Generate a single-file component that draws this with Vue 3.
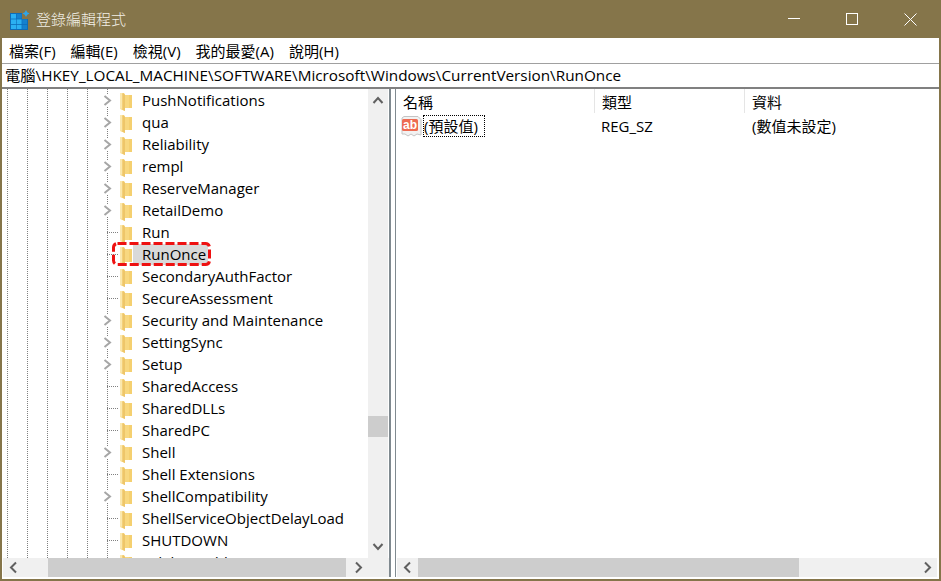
<script setup>
const rows = [
  ['PushNotifications', 1], ['qua', 1], ['Reliability', 1], ['rempl', 1],
  ['ReserveManager', 1], ['RetailDemo', 1], ['Run', 0], ['RunOnce', 0],
  ['SecondaryAuthFactor', 0], ['SecureAssessment', 0], ['Security and Maintenance', 1],
  ['SettingSync', 1], ['Setup', 1], ['SharedAccess', 0], ['SharedDLLs', 0],
  ['SharedPC', 0], ['Shell', 1], ['Shell Extensions', 0], ['ShellCompatibility', 1],
  ['ShellServiceObjectDelayLoad', 0], ['SHUTDOWN', 0], ['sidebarwidth', 0]
]
const menus = ['檔案(F)', '編輯(E)', '檢視(V)', '我的最愛(A)', '說明(H)']
const guides = [0, 1, 2, 3, 4]
</script>

<template>
  <div class="window">
    <header class="title">
      <svg class="appicon" width="21" height="20" viewBox="0 0 21 20">
        <rect x="0" y="3" width="18" height="17" fill="#0e6cb8" />
        <g fill="#2bb0f2">
          <rect x="1" y="4" width="5" height="4.6" />
          <rect x="1" y="9.4" width="5" height="4.6" />
          <rect x="6.6" y="9.4" width="5" height="4.6" />
          <rect x="1" y="14.8" width="5" height="4.2" />
          <rect x="6.6" y="14.8" width="5" height="4.2" />
        </g>
        <g fill="#1581cf">
          <rect x="6.6" y="4" width="5" height="4.6" />
          <rect x="12.2" y="9.4" width="4.8" height="4.6" />
          <rect x="12.2" y="14.8" width="4.8" height="4.2" />
        </g>
        <rect x="12" y="2" width="9" height="7" fill="#85754a" />
        <path d="M16 0l1.2 2.3L19.6 3.5 17.2 4.7 16 7l-1.2-2.3L12.4 3.5l2.4-1.2z" fill="#2fa6ea" />
      </svg>
      <span class="title-text">登錄編輯程式</span>
      <div class="controls">
        <svg class="ctl" width="12" height="12" viewBox="0 0 12 12"><path d="M0 5.5h12" stroke="#fff" fill="none" /></svg>
        <svg class="ctl" width="12" height="12" viewBox="0 0 12 12"><rect x=".5" y=".5" width="11" height="11" stroke="#fff" fill="none" /></svg>
        <svg class="ctl" width="13" height="13" viewBox="0 0 13 13"><path d="M.5.5l12 12M12.5.5l-12 12" stroke="#fff" fill="none" /></svg>
      </div>
    </header>

    <nav class="menu">
      <span v-for="m in menus" :key="m">{{ m }}</span>
    </nav>

    <div class="addr">電腦\HKEY_LOCAL_MACHINE\SOFTWARE\Microsoft\Windows\CurrentVersion\RunOnce</div>

    <main class="panes">
      <section class="tree-pane">
        <div class="tree-body">
          <div class="tree">
            <div v-for="r in rows" :key="r[0]" class="row">
              <i v-for="g in guides" :key="g" class="guide"></i>
              <div class="twist">
                <svg v-if="r[1]" class="chev" width="9" height="11" viewBox="0 0 9 11">
                  <path d="M1.5 1l5.5 4.5L1.5 10" fill="none" stroke="#a6a6a6" stroke-width="2" />
                </svg>
                <i v-else class="stub"></i>
              </div>
              <svg class="folder" width="13" height="18" viewBox="0 0 13 18">
                <path d="M0 0h4l1 2h7v13H5v3L0 16z" fill="#f8d880" />
                <path d="M0 0h2.4v15.4L0 16z" fill="#fbe8ae" />
                <path d="M2.4 0.5h1.6L5 2v16l-2.6-1.2z" fill="#eec669" />
                <path d="M9 2h3v13H9z" fill="#f5d070" />
              </svg>
              <span class="label" :class="{ sel: r[0] === 'RunOnce' }">{{ r[0] }}</span>
              <svg v-if="r[0] === 'RunOnce'" class="mark" width="99" height="24" viewBox="0 0 99 24">
                <rect x="1.5" y="1.5" width="96" height="21" rx="4" fill="none" stroke="#ee1111" stroke-width="3" stroke-dasharray="9 3" />
              </svg>
            </div>
          </div>
          <div class="vbar">
            <svg class="arr" width="20" height="22" viewBox="0 0 20 22"><path d="M5.5 14l4.5-5 4.5 5" fill="none" stroke="#606060" stroke-width="2" /></svg>
            <div class="vtrack"><div class="vthumb"></div></div>
            <svg class="arr" width="20" height="22" viewBox="0 0 20 22"><path d="M5.5 8l4.5 5 4.5-5" fill="none" stroke="#606060" stroke-width="2" /></svg>
          </div>
        </div>
        <div class="hbar">
          <svg class="harr" width="20" height="19" viewBox="0 0 20 19"><path d="M13 4.5l-5 5 5 5" fill="none" stroke="#606060" stroke-width="2" /></svg>
          <div class="htrack t1"><div class="hthumb"></div></div>
          <svg class="harr" width="20" height="19" viewBox="0 0 20 19"><path d="M8 4.5l5 5-5 5" fill="none" stroke="#606060" stroke-width="2" /></svg>
          <div class="corner"></div>
        </div>
      </section>

      <div class="split"></div>

      <section class="list-pane">
        <div class="list-head">
          <div class="hcell c1">名稱</div>
          <div class="hcell c2">類型</div>
          <div class="hcell c3">資料</div>
        </div>
        <div class="list-row">
          <div class="cell c1 namecell">
            <svg class="ab" width="21" height="22" viewBox="0 0 21 22">
              <path d="M3 1.5h14l3 3V20l-4-1-3 2-3-2-3 2-3-2H1V3z" fill="#f2f2f2" stroke="#c4c4c4" />
              <rect x="1" y="4" width="16" height="12" rx="1.5" fill="#ee6a52" />
              <text x="9" y="14" class="abtext">ab</text>
            </svg>
            <span class="focus">(預設值)</span>
          </div>
          <div class="cell c2">REG_SZ</div>
          <div class="cell c3">(數值未設定)</div>
        </div>
        <div class="list-fill"></div>
        <div class="hbar lbar">
          <svg class="harr" width="21" height="19" viewBox="0 0 21 19"><path d="M13 4.5l-5 5 5 5" fill="none" stroke="#606060" stroke-width="2" /></svg>
          <div class="htrack t2"><div class="hthumb"></div></div>
          <svg class="harr" width="20" height="19" viewBox="0 0 20 19"><path d="M8 4.5l5 5-5 5" fill="none" stroke="#606060" stroke-width="2" /></svg>
        </div>
      </section>
    </main>
  </div>
</template>

<style scoped>
.window {
  width: 941px;
  height: 581px;
  box-sizing: border-box;
  background: #85754a;
  padding: 0 2px 2px;
  display: flex;
  flex-direction: column;
  overflow: hidden;
  font-family: "Open Sans", "Noto Sans CJK TC", sans-serif;
  font-size: 15px;
  color: #000;
}
.title {
  height: 38px;
  flex: none;
  display: flex;
  align-items: center;
  padding-left: 8px;
}
.appicon { flex: none; margin-top: 2px; }
.title-text {
  margin-left: 5px;
  margin-top: -1px;
  color: #f2efe6;
  font-family: "Noto Sans CJK TC", sans-serif;
  font-weight: 300;
  font-size: 15px;
}
.controls {
  margin-left: auto;
  width: 174px;
  display: grid;
  grid-template-columns: 58px 58px 58px;
  place-items: center;
}
.ctl { display: block; }
.menu {
  height: 25px;
  flex: none;
  background: #fff;
  display: flex;
  align-items: center;
  gap: 15px;
  padding-left: 7px;
  font-size: 15px;
}
.addr {
  height: 23px;
  flex: none;
  background: #fff;
  border-top: 1px solid #a0a0a0;
  border-bottom: 2px solid #808080;
  padding-left: 3px;
  line-height: 23px;
  white-space: nowrap;
  font-size: 15.3px;
}
.panes {
  flex: 1;
  min-height: 0;
  display: flex;
  background: #fff;
  padding: 0 1px 2px;
}
.tree-pane {
  width: 386px;
  flex: none;
  display: flex;
  flex-direction: column;
}
.tree-body {
  flex: 1;
  min-height: 0;
  display: flex;
}
.tree {
  flex: 1;
  min-width: 0;
  overflow: hidden;
}
.row {
  position: relative;
  height: 22px;
  display: flex;
  align-items: center;
  padding-left: 4px;
  white-space: nowrap;
}
.guide {
  width: 20px;
  height: 22px;
  flex: none;
  box-sizing: border-box;
  background: repeating-linear-gradient(to bottom, #808080 0 1px, transparent 1px 2px) 0 0 / 1px 100% no-repeat;
}
.twist {
  width: 13px;
  height: 22px;
  flex: none;
  display: flex;
  align-items: center;
  background: repeating-linear-gradient(to bottom, #808080 0 1px, transparent 1px 2px) 0 0 / 1px 100% no-repeat;
  position: relative;
}
.chev {
  margin-left: -4px;
  background: #fff;
  height: 13px;
  box-sizing: border-box;
  padding: 1px 0;
}
.stub {
  display: block;
  width: 11px;
  height: 1px;
  background: repeating-linear-gradient(to right, #808080 0 1px, transparent 1px 2px);
}
.folder { flex: none; margin-top: 3px; }
.label {
  margin-left: 9px;
  padding-right: 2px;
  line-height: 21px;
  color: #000;
}
.label.sel {
  margin-left: 0;
  padding-left: 9px;
  background: #d9d9d9;
}
.mark {
  position: absolute;
  left: 109px;
  top: -1px;
  display: block;
}
.vbar {
  width: 20px;
  flex: none;
  background: #f0f0f0;
  display: flex;
  flex-direction: column;
  margin-right: 1px;
}
.arr, .harr { flex: none; display: block; }
.vtrack { flex: 1; padding-top: 305px; }
.vthumb { height: 21px; background: #cdcdcd; }
.hbar {
  height: 19px;
  flex: none;
  display: flex;
  background: #f0f0f0;
}
.lbar { margin-left: 1px; margin-right: 1px; }
.htrack { flex: 1; display: flex; }
.t1 { padding: 0 0 0 25px; }
.t1 .hthumb { width: 298px; }
.t2 .hthumb { width: 381px; }
.hthumb { background: #cdcdcd; height: 19px; }
.corner { width: 21px; flex: none; }
.split {
  width: 7px;
  flex: none;
  box-sizing: border-box;
  border-left: 2px solid #808a90;
  border-right: 1px solid #808a90;
}
.list-pane {
  flex: 1;
  min-width: 0;
  display: flex;
  flex-direction: column;
}
.list-head {
  height: 26px;
  flex: none;
  display: flex;
}
.hcell {
  box-sizing: border-box;
  height: 24px;
  line-height: 27px;
  padding-left: 7px;
  border-right: 1px solid #e5e5e5;
}
.c1 { width: 199px; flex: none; }
.c2 { width: 150px; flex: none; }
.c3 { flex: 1; border-right: none; }
.list-row {
  height: 22px;
  flex: none;
  display: flex;
  align-items: center;
}
.cell {
  box-sizing: border-box;
  white-space: nowrap;
  line-height: 23px;
}
.cell.c2 { padding-left: 6px; }
.cell.c3 { padding-left: 7px; }
.namecell {
  display: flex;
  align-items: center;
  padding-left: 5px;
}
.ab { flex: none; display: block; }
.abtext {
  font-family: "Liberation Sans", sans-serif;
  font-weight: 700;
  font-size: 12px;
  fill: #fff;
  text-anchor: middle;
}
.focus {
  margin-left: 1px;
  width: 62px;
  height: 22px;
  box-sizing: border-box;
  border: 1px dotted #000;
  line-height: 21px;
}
.list-fill { flex: 1; }
</style>
